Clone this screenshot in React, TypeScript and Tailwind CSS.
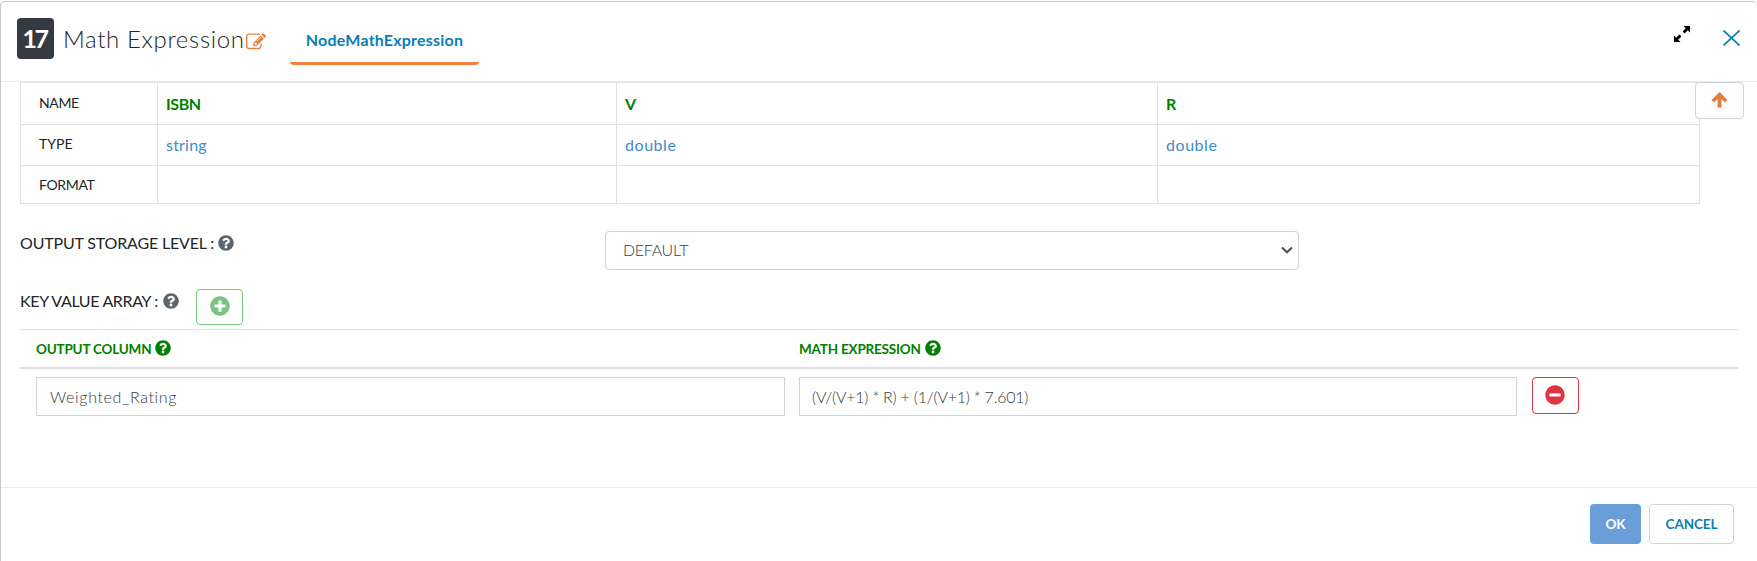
import { FaMinusCircle, FaPlusCircle, FaQuestionCircle } from "react-icons/fa";

const columns = [
  { name: "ISBN", type: "string", typeClass: "tracking-[0.2px]" },
  { name: "V", type: "double", typeClass: "tracking-[0.55px]" },
  { name: "R", type: "double", typeClass: "tracking-[0.55px]" },
];

function Help({ className }: { className: string }) {
  return <FaQuestionCircle className={`size-4 shrink-0 ${className}`} />;
}

function EditIcon() {
  return (
    <svg viewBox="0 0 1792 1792" className="mt-1.5 size-[20px] shrink-0 fill-[#e8803f]">
      <path d="M888 1184l116-116-152-152-116 116v56h96v96h56zm440-720q-16-16-33 1l-350 350q-17 17-1 33t33-1l350-350q17-17 1-33zm80 594v190q0 119-84.500 203.500t-203.500 84.500h-832q-119 0-203.500-84.500t-84.500-203.500v-832q0-119 84.500-203.500t203.500-84.500h832q63 0 117 25 15 7 18 23 3 17-9 29l-49 49q-14 14-32 8-23-6-45-6h-832q-66 0-113 47t-47 113v832q0 66 47 113t113 47h832q66 0 113-47t47-113v-126q0-13 9-22l64-64q15-15 35-7t20 29zm-96-738l288 288-672 672h-288v-288zm444 132l-92 92-288-288 92-92q28-28 68-28t68 28l152 152q28 28 28 68t-28 68z" />
    </svg>
  );
}

function Header() {
  return (
    <header className="flex h-20 shrink-0 border-b border-[#e9ecef] pl-4">
      <div className="mt-4 flex h-[41px] w-[37px] items-center justify-center rounded-[4px] bg-[#343a40] pt-px pr-[2px] text-[25px] font-bold tracking-[-2.5px] text-white">
        17
      </div>
      <div className="mt-[15px] ml-[9px] flex h-[44px] w-[183px] items-center text-2xl font-light tracking-[0.65px] whitespace-nowrap text-[#212529]">
        Math Expression
      </div>
      <div className="flex h-[73px] w-5 items-center">
        <EditIcon />
      </div>
      <div className="mt-[15px] ml-[24px] flex h-[48px] w-[189px] justify-center rounded-[4px] border-b-[3px] border-[#f0803c] pt-[11px] text-base leading-[24px] font-bold tracking-[0.2px] text-[#0a7db8]">
        NodeMathExpression
      </div>
      <div className="mr-[17px] ml-auto flex items-start gap-[33px]">
        <svg viewBox="0 0 16 16" className="mt-6 size-4" fill="#000">
          <path d="M9.500 0H16v6.500L13.800 4.300 10.600 7.500 8.600 5.500 11.800 2.300zM0 9.500V16h6.500L4.200 13.800 7.400 10.600 5.400 8.600 2.200 11.800z" />
        </svg>
        <svg viewBox="0 0 17 16" className="mt-7 h-4 w-[17px]" stroke="#0a80b0" strokeWidth="1.7">
          <path d="M0.500 0.500 16.500 15.500M16.500 0.500 0.500 15.500" />
        </svg>
      </div>
    </header>
  );
}

function SchemaTable() {
  return (
    <div className="relative ml-[19px] w-[1680px]">
      <table className="w-[1680px] table-fixed border-collapse text-left [&_td]:border [&_td]:border-[#dee2e6] [&_td]:p-0">
        <colgroup>
          <col className="w-[137px]" />
          <col className="w-[459px]" />
          <col className="w-[541px]" />
          <col className="w-[542px]" />
        </colgroup>
        <tbody>
          <tr className="h-[42px]">
            <td><div className="pb-[2px] pl-[18px] text-sm tracking-[-0.35px] text-[#212529]">NAME</div></td>
            {columns.map((c) => (
              <td key={c.name}>
                <div className="pt-px pl-2 text-base leading-5 font-bold tracking-[-0.4px] text-[#008000]">{c.name}</div>
              </td>
            ))}
          </tr>
          <tr className="h-[41px]">
            <td><div className="pb-[3px] pl-[18px] text-sm text-[#212529]">TYPE</div></td>
            {columns.map((c) => (
              <td key={c.name}>
                <div className={`pl-2 text-base leading-5 text-[#428bca] ${c.typeClass}`}>{c.type}</div>
              </td>
            ))}
          </tr>
          <tr className="h-[38px]">
            <td><div className="pt-px pl-[18px] text-sm tracking-[-0.35px] text-[#212529]">FORMAT</div></td>
            <td />
            <td />
            <td />
          </tr>
        </tbody>
      </table>
      <button className="absolute top-0 left-[1675px] flex h-[37px] w-[49px] items-center justify-center rounded-[4px] border border-[#ced4da] bg-white">
        <svg viewBox="0 0 17 16" className="-mt-0.5 h-4 w-[17px]" fill="none" stroke="#e27d42" strokeWidth="4">
          <path d="M8.500 15.500V4" />
          <path d="M1.800 9.300 8.500 2.600 15.200 9.300" strokeWidth="3.600" />
        </svg>
      </button>
    </div>
  );
}

function KeyValues() {
  return (
    <section className="ml-[19px] w-[1718px]">
      <div className="flex h-10 border-y border-b-2 border-[#dee2e6] pl-4 text-[13.500px] font-bold text-[#008000]">
        <div className="flex w-[763px] gap-1">
          <span className="w-[115px] leading-[39px] tracking-[-0.2px] whitespace-nowrap">OUTPUT COLUMN</span>
          <Help className="mt-[10px]" />
        </div>
        <div className="flex gap-1">
          <span className="w-[122px] leading-[39px] tracking-[-0.2px] whitespace-nowrap">MATH EXPRESSION</span>
          <Help className="mt-[10px]" />
        </div>
      </div>
      <div className="flex items-start pt-2 pl-4 text-base font-light text-[#343a40]">
        <div className="h-[39px] w-[749px] border border-[#ced4da] pl-[13px] leading-[38px] tracking-[0.65px]">Weighted_Rating</div>
        <div className="ml-[14px] h-[39px] w-[718px] border border-[#ced4da] pl-3 leading-[38px] tracking-[-0.22px]">
          (V/(V+1) * R) + (1/(V+1) * 7.601)
        </div>
        <button className="ml-[15px] flex h-[37px] w-[47px] items-center justify-center rounded-[4px] border border-[#dc3545] pr-px pb-px">
          <FaMinusCircle className="size-5 text-[#dc3545]" />
        </button>
      </div>
    </section>
  );
}

export default function App() {
  return (
    <div className="h-[561px] overflow-hidden bg-white font-['Lato',sans-serif]">
      <div className="mt-px flex h-[561px] w-full flex-col rounded-t-[5px] border-t border-l border-[#c6c6c6]">
        <Header />
        <SchemaTable />
        <div className="mt-[27px] flex h-[39px] pl-[19px] text-base text-[#212529]">
          <div className="flex w-[585px]">
            <span className="-mt-px w-[198px] leading-[26px] tracking-[-0.17px] whitespace-nowrap">OUTPUT STORAGE LEVEL :</span>
            <Help className="mt-1 text-[#5a6570]" />
          </div>
          <div className="flex h-[39px] w-[694px] items-center justify-between rounded-[4px] border border-[#ced4da] pr-[5px] pb-px pl-[17px] font-light tracking-[-0.3px] text-[#343a40]">
            DEFAULT
            <svg viewBox="0 0 12 8" className="h-2 w-3" fill="none" stroke="#495057" strokeWidth="2">
              <path d="M1 1.500 6 6.300 11 1.500" />
            </svg>
          </div>
        </div>
        <div className="mt-[19px] flex h-10 pl-[19px] text-base text-[#212529]">
          <span className="-mt-px w-[143px] leading-[26px] tracking-[-0.35px] whitespace-nowrap">KEY VALUE ARRAY :</span>
          <Help className="mt-1 text-[#5a6570]" />
          <button className="ml-[17px] flex h-9 w-[47px] items-center justify-center rounded-[4px] border border-[#78c680] pb-[2px]">
            <FaPlusCircle className="size-5 text-[#7bc381]" />
          </button>
        </div>
        <KeyValues />
        <footer className="mt-auto flex h-[75px] items-start justify-end gap-2 border-t border-[#e9ecef] pt-4 pr-[23px] text-[13.500px] font-bold">
          <button className="h-10 w-[51px] rounded-[4px] bg-[#6a9ed8] text-white">OK</button>
          <button className="h-10 w-[85px] rounded-[4px] border border-[#ced4da] tracking-[-0.1px] text-[#0a7db8]">CANCEL</button>
        </footer>
      </div>
    </div>
  );
}
